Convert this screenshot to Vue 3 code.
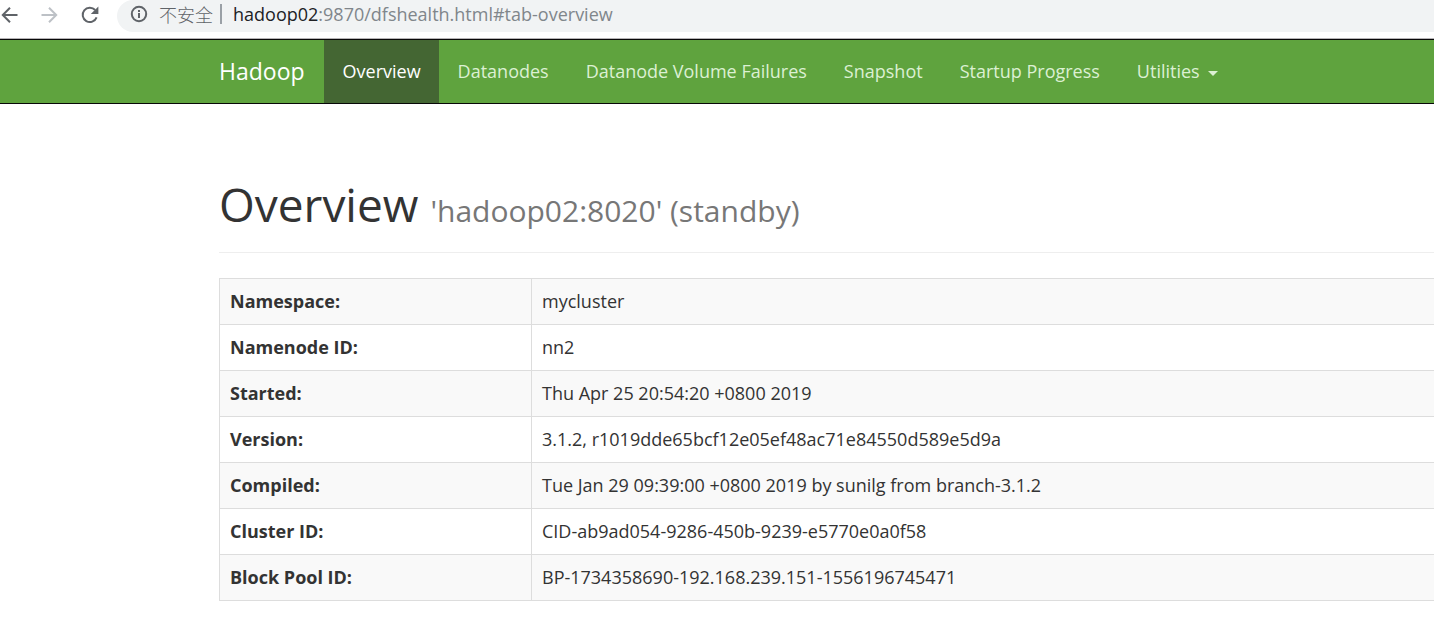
<script setup>
const navItems = ['Overview', 'Datanodes', 'Datanode Volume Failures', 'Snapshot', 'Startup Progress']

const rows = [
  ['Namespace:', 'mycluster'],
  ['Namenode ID:', 'nn2'],
  ['Started:', 'Thu Apr 25 20:54:20 +0800 2019'],
  ['Version:', '3.1.2, r1019dde65bcf12e05ef48ac71e84550d589e5d9a'],
  ['Compiled:', 'Tue Jan 29 09:39:00 +0800 2019 by sunilg from branch-3.1.2'],
  ['Cluster ID:', 'CID-ab9ad054-9286-450b-9239-e5770e0a0f58'],
  ['Block Pool ID:', 'BP-1734358690-192.168.239.151-1556196745471'],
]
</script>

<template>
  <div class="page">
    <div class="toolbar">
      <button class="tool" type="button" aria-label="Back">
        <svg width="20" height="20" viewBox="0 0 20 20" fill="none" stroke="#5f6368" stroke-width="2">
          <path d="M17.5 10H3M10 2.8 2.8 10l7.2 7.2" />
        </svg>
      </button>
      <button class="tool" type="button" aria-label="Forward" disabled>
        <svg width="20" height="20" viewBox="0 0 20 20" fill="none" stroke="#bdc1c6" stroke-width="2">
          <path d="M1.5 10H16M9 2.8l7.2 7.2L9 17.2" />
        </svg>
      </button>
      <button class="tool" type="button" aria-label="Reload">
        <svg width="20" height="20" viewBox="0 0 20 20">
          <path d="M16.6 12.4A7.2 7.2 0 1 1 15.2 5" fill="none" stroke="#5f6368" stroke-width="2" />
          <path d="M18.4 1.4V9h-7.6z" fill="#5f6368" />
        </svg>
      </button>
      <div class="address">
        <svg class="info" width="18" height="18" viewBox="0 0 18 18">
          <circle cx="9" cy="9" r="7.2" fill="none" stroke="#5f6368" stroke-width="2" />
          <path d="M8 8h2v5H8zM8 5h2v2H8z" fill="#5f6368" />
        </svg>
        <span class="insecure">不安全</span>
        <span class="divider"></span>
        <span class="url"><span class="host">hadoop02</span>:9870/dfshealth.html#tab-overview</span>
      </div>
    </div>

    <nav class="navbar">
      <a class="brand" href="#">Hadoop</a>
      <ul class="menu">
        <li v-for="(item, i) in navItems" :key="item">
          <a href="#" class="link" :class="{ active: i === 0 }">{{ item }}</a>
        </li>
        <li>
          <a href="#" class="link">Utilities<span class="caret"></span></a>
        </li>
      </ul>
    </nav>

    <main class="content">
      <h1 class="title">Overview <small>'hadoop02:8020' (standby)</small></h1>
      <table class="info-table">
        <tbody>
          <tr v-for="[label, value] in rows" :key="label">
            <th scope="row">{{ label }}</th>
            <td>{{ value }}</td>
          </tr>
        </tbody>
      </table>
    </main>
  </div>
</template>

<style>
body {
  margin: 0;
  background: #fff;
}
</style>

<style scoped>
.page {
  font-family: "Open Sans", "Noto Sans", "Noto Sans CJK SC", sans-serif;
  font-size: 18px;
  line-height: 26px;
  color: #333;
  overflow-x: hidden;
}

.toolbar {
  display: flex;
  align-items: flex-start;
  height: 38px;
  border-bottom: 1px solid #b6b4b6;
}

.tool {
  display: flex;
  align-items: center;
  width: 40px;
  height: 29px;
  padding: 0;
  border: 0;
  background: none;
}

.address {
  flex: 1;
  display: flex;
  align-items: center;
  box-sizing: border-box;
  height: 32px;
  margin-left: -3px;
  padding: 0 0 4px 13px;
  border-radius: 0 0 0 16px / 0 0 0 16px;
  border-top-left-radius: 16px;
  background: #f1f3f4;
  color: #80868b;
  white-space: nowrap;
}

.insecure {
  margin-left: 11px;
  font-family: "Noto Sans CJK SC", sans-serif;
  font-weight: 300;
  color: #5f6368;
}

.divider {
  width: 2px;
  height: 20px;
  margin: 0 11px 0 7px;
  background: #9aa0a6;
}

.host {
  color: #202124;
}

.navbar {
  display: flex;
  padding-left: 219px;
  border-top: 1px solid #080808;
  border-bottom: 1px solid #080808;
  background: #5fa33e;
}

.brand {
  padding: 18px 19px 18px 0;
  font-size: 23px;
  color: #fff;
  text-decoration: none;
}

.menu {
  display: flex;
  margin: 0;
  padding: 0;
  list-style: none;
  white-space: nowrap;
}

.link {
  display: block;
  padding: 18px 18px 19px 19px;
  color: #dcf0d3;
  text-decoration: none;
}

.link.active {
  background: #446633;
  color: #fff;
}

.caret {
  display: inline-block;
  margin-left: 8px;
  border-top: 5px solid #dcf0d3;
  border-left: 5px solid transparent;
  border-right: 5px solid transparent;
  vertical-align: middle;
}

.content {
  padding: 74px 0 36px 219px;
}

.title {
  margin: 0 0 25px;
  padding-bottom: 21px;
  border-bottom: 1px solid #eee;
  font-size: 46px;
  font-weight: 400;
  line-height: 53px;
}

.title small {
  font-size: 30px;
  font-weight: 400;
  line-height: 1;
  color: #777;
}

.info-table {
  width: 100%;
  border-collapse: collapse;
  border: 1px solid #ddd;
  border-right: 0;
}

.info-table th,
.info-table td {
  padding: 9px 10px 10px;
  border: 1px solid #ddd;
  text-align: left;
}

.info-table td {
  border-right: 0;
}

.info-table th {
  box-sizing: border-box;
  width: 312px;
  font-weight: 700;
}

.info-table tr:nth-child(odd) {
  background: #f9f9f9;
}
</style>
